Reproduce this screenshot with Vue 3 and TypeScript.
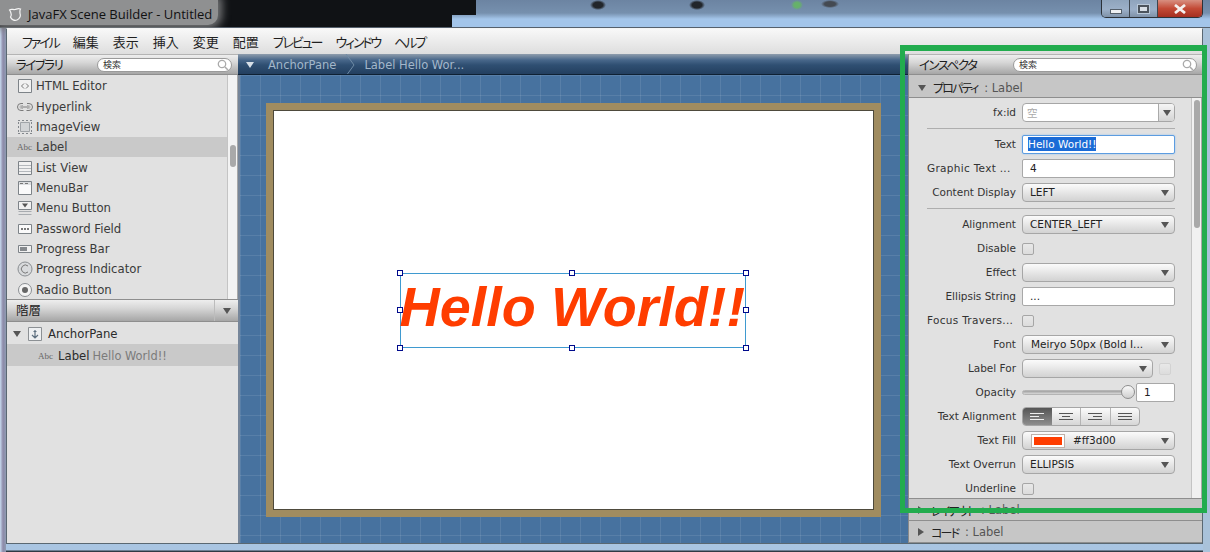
<script setup lang="ts">
interface Shape { d: string; fill?: string; stroke?: string }
interface LibItem { name: string; icon: Shape[]; abc?: boolean; selected?: boolean }

const box = (y: number, h: number): string => `M1.5 ${y}.5h13v${h}h-13z`
const line = '#7d8388'
const fillGrey = '#f1f1f1'

const libItems: LibItem[] = [
  { name: 'HTML Editor', icon: [
    { d: box(1, 13), fill: fillGrey, stroke: line },
    { d: 'M7 5.500 4.500 8 7 10.500M9 5.500 11.500 8 9 10.500', stroke: '#777' } ] },
  { name: 'Hyperlink', icon: [
    { d: 'M6 4.500H4a3.500 3.500 0 0 0 0 7h2.500M10 4.500h2a3.500 3.500 0 0 1 0 7H9.500M4 8h8', stroke: '#7a7a7a' },
    { d: 'M6 6.500H4.500a1.500 1.500 0 0 0 0 3H6M10 6.500h1.500a1.500 1.500 0 0 1 0 3H10', stroke: '#b0b0b0' } ] },
  { name: 'ImageView', icon: [
    { d: 'M1 1.500h2m2 0h2m2 0h2m2 0h2M1 14.500h2m2 0h2m2 0h2m2 0h2M1.500 3v2m0 2v2m0 2v2M14.500 3v2m0 2v2m0 2v2', stroke: '#82878c' },
    { d: 'M3.500 3.500h9v9h-9z', fill: '#d2d4d6', stroke: '#a0a4a8' } ] },
  { name: 'Label', abc: true, selected: true, icon: [] },
  { name: 'List View', icon: [
    { d: box(1, 13), fill: fillGrey, stroke: line },
    { d: 'M2 5.500h12M2 8.500h12M2 11.500h12', stroke: '#b4b8bc' } ] },
  { name: 'MenuBar', icon: [
    { d: box(1, 13), fill: '#fafafa', stroke: line },
    { d: 'M2 2h12v3H2z', fill: '#dcdee0' },
    { d: 'M3 3.500h3M8 3.500h3', stroke: '#777' } ] },
  { name: 'Menu Button', icon: [
    { d: box(1, 8), fill: fillGrey, stroke: line },
    { d: 'M5 3.500h6L8 7.500z', fill: '#555' },
    { d: 'M1.500 11.500h13M1.500 14.500h13', stroke: '#a8acb0' } ] },
  { name: 'Password Field', icon: [
    { d: box(3, 9), fill: '#fafafa', stroke: line },
    { d: 'M4 7h2v2H4zM7 7h2v2H7zM10 7h2v2h-2z', fill: '#777' } ] },
  { name: 'Progress Bar', icon: [
    { d: box(4, 7), fill: fillGrey, stroke: line },
    { d: 'M3 6h7v4H3z', fill: '#85898d' } ] },
  { name: 'Progress Indicator', icon: [
    { d: 'M8 1a7 7 0 1 0 0 14A7 7 0 0 0 8 1z', fill: '#d8dadc', stroke: '#8a8e92' },
    { d: 'M11 5a4 4 0 1 0 0 6', stroke: '#777' } ] },
  { name: 'Radio Button', icon: [
    { d: 'M8 1.500a6.500 6.500 0 1 0 0 13a6.500 6.500 0 0 0 0-13z', fill: '#f4f4f4', stroke: '#8a8e92' },
    { d: 'M8 5a3 3 0 1 0 0 6a3 3 0 0 0 0-6z', fill: '#666' } ] },
]

const menus: string[] = ['ファイル', '編集', '表示', '挿入', '変更', '配置', 'プレビュー', 'ウィンドウ', 'ヘルプ']
const isKana = (m: string): boolean => /[ァ-ヶー]/.test(m)

type Kind = 'fxid' | 'focused' | 'field' | 'combo' | 'check' | 'sep' | 'labelFor' | 'slider' | 'align' | 'fill'
interface PropRow { label?: string; kind: Kind; value?: string; indent?: boolean }

const props: PropRow[] = [
  { label: 'fx:id', kind: 'fxid', value: '空' },
  { kind: 'sep' },
  { label: 'Text', kind: 'focused', value: 'Hello World!!' },
  { label: 'Graphic Text ...', kind: 'field', value: '4' },
  { label: 'Content Display', kind: 'combo', value: 'LEFT' },
  { kind: 'sep' },
  { label: 'Alignment', kind: 'combo', value: 'CENTER_LEFT' },
  { label: 'Disable', kind: 'check' },
  { label: 'Effect', kind: 'combo', value: '' },
  { label: 'Ellipsis String', kind: 'field', value: '...' },
  { label: 'Focus Travers...', kind: 'check' },
  { label: 'Font', kind: 'combo', value: 'Meiryo 50px (Bold I...', indent: true },
  { label: 'Label For', kind: 'labelFor' },
  { label: 'Opacity', kind: 'slider', value: '1' },
  { label: 'Text Alignment', kind: 'align' },
  { label: 'Text Fill', kind: 'fill', value: '#ff3d00' },
  { label: 'Text Overrun', kind: 'combo', value: 'ELLIPSIS' },
  { label: 'Underline', kind: 'check' },
]

const alignIcons: string[] = [
  'M0 1.500h14M0 4.500h9M0 7.500h14',
  'M0 1.500h14M3 4.500h8M0 7.500h14',
  'M0 1.500h14M5 4.500h9M0 7.500h14',
  'M0 1.500h14M0 4.500h14M0 7.500h14',
]

const handles: string[] = ['tl', 'tc', 'tr', 'ml', 'mr', 'bl', 'bc', 'br']
</script>

<template>
  <div class="screen">
    <header class="titlebar">
      <div class="title">
        <svg class="logo" width="14" height="14" viewBox="0 0 14 14">
          <path d="M1.500 3C3.500 1.500 5 3 7 2.500S10 1 12.500 2c-1 1.500-.5 3-.5 4.500A5 5 0 0 1 2.500 10C4 7.500 3 5 1.500 3z" fill="none" stroke="#f4f4f4" stroke-width="1.200" />
        </svg>
        <span>JavaFX Scene Builder - Untitled</span>
      </div>
      <div class="winbtns">
        <div class="wb min"><i></i></div>
        <div class="wb max"><i></i></div>
        <div class="wb close">
          <svg width="14" height="10" viewBox="0 0 14 10"><path d="M2 1l10 8M12 1 2 9" stroke="#f4f0ee" stroke-width="2.800" /></svg>
        </div>
      </div>
    </header>

    <div class="app">
      <nav class="menubar">
        <span v-for="m in menus" :key="m" :class="{ kana: isKana(m) }">{{ m }}</span>
      </nav>

      <div class="workspace">
        <aside class="left">
          <div class="phead">
            <span class="ptitle">ライブラリ</span>
            <div class="search lib-search">
              <span>検索</span>
              <svg width="12" height="12" viewBox="0 0 12 12"><circle cx="5" cy="5" r="3.700" fill="none" stroke="#aaa" stroke-width="1.300" /><path d="M8 8l3 3" stroke="#aaa" stroke-width="1.500" /></svg>
            </div>
          </div>
          <div class="library">
            <ul class="items">
              <li v-for="it in libItems" :key="it.name" :class="{ sel: it.selected }">
                <span v-if="it.abc" class="abc">Abc</span>
                <svg v-else width="16" height="16" viewBox="0 0 16 16" class="ic">
                  <path v-for="(s, i) in it.icon" :key="i" :d="s.d" :fill="s.fill ?? 'none'" :stroke="s.stroke ?? 'none'" />
                </svg>
                <span>{{ it.name }}</span>
              </li>
            </ul>
            <div class="vscroll lib-scroll"><div class="thumb"></div></div>
          </div>
          <div class="phead hier">
            <span class="ptitle">階層</span>
            <div class="hmenu"><b class="tri down"></b></div>
          </div>
          <div class="tree">
            <div class="trow">
              <b class="tri down dark"></b>
              <svg width="16" height="16" viewBox="0 0 16 16">
                <path d="M1.500 1.500h13v13h-13z" fill="#eef0f2" stroke="#8c9094" />
                <path d="M8 4v8M5 9l3 3 3-3M6.500 5.500h3" fill="none" stroke="#5e7080" stroke-width="1.200" />
              </svg>
              <span class="tname">AnchorPane</span>
            </div>
            <div class="trow child">
              <span class="abc">Abc</span>
              <span class="tname">Label</span>
              <span class="tval">Hello World!!</span>
            </div>
          </div>
        </aside>

        <main class="center">
          <div class="crumbs">
            <b class="tri down light"></b>
            <span class="crumb">AnchorPane</span>
            <svg width="10" height="22" viewBox="0 0 10 22"><path d="M1 0l8 11-8 11" fill="none" stroke="#6f8ba6" /></svg>
            <span class="crumb">Label Hello Wor...</span>
          </div>
          <div class="canvas">
            <div class="page">
              <div class="sheet">
                <div class="selection">
                  <span class="hello">Hello World!!</span>
                  <i v-for="h in handles" :key="h" class="handle" :class="h"></i>
                </div>
              </div>
            </div>
          </div>
        </main>

        <aside class="right">
          <div class="phead insp">
            <span class="ptitle">インスペクタ</span>
            <div class="search insp-search">
              <span>検索</span>
              <svg width="12" height="12" viewBox="0 0 12 12"><circle cx="5" cy="5" r="3.700" fill="none" stroke="#aaa" stroke-width="1.300" /><path d="M8 8l3 3" stroke="#aaa" stroke-width="1.500" /></svg>
            </div>
          </div>
          <div class="section first"><b class="tri down dark"></b><span class="jp">プロパティ</span><span class="sec-rest"> : Label</span></div>
          <div class="propwrap">
            <div class="props">
              <template v-for="(r, i) in props" :key="i">
                <div v-if="r.kind === 'sep'" class="sep"></div>
                <div v-else class="prow">
                  <label class="plabel" :class="{ cut: r.label?.endsWith('...') }">{{ r.label }}</label>
                  <div class="pctl">
                    <div v-if="r.kind === 'fxid'" class="combo editable">
                      <span class="empty">{{ r.value }}</span>
                      <span class="arrowbox"><b class="tri down dark"></b></span>
                    </div>
                    <div v-else-if="r.kind === 'focused'" class="field focused"><mark>{{ r.value }}</mark></div>
                    <div v-else-if="r.kind === 'field'" class="field">{{ r.value }}</div>
                    <div v-else-if="r.kind === 'combo'" class="combo" :class="{ indent: r.indent }">
                      <span>{{ r.value }}</span><b class="tri down dark"></b>
                    </div>
                    <div v-else-if="r.kind === 'check'" class="check"></div>
                    <div v-else-if="r.kind === 'labelFor'" class="split">
                      <div class="combo grow"><span></span><b class="tri down dark"></b></div>
                      <div class="check faint"></div>
                    </div>
                    <div v-else-if="r.kind === 'slider'" class="split slider-row">
                      <div class="slider"><i class="knob"></i></div>
                      <div class="field small">{{ r.value }}</div>
                    </div>
                    <div v-else-if="r.kind === 'align'" class="seg">
                      <button v-for="(d, k) in alignIcons" :key="k" :class="{ on: k === 0 }" type="button">
                        <svg width="14" height="9" viewBox="0 0 14 9"><path :d="d" fill="none" :stroke="k === 0 ? '#eee' : '#555'" /></svg>
                      </button>
                    </div>
                    <div v-else-if="r.kind === 'fill'" class="combo color">
                      <span class="swatch"></span><span class="colortxt">{{ r.value }}</span><b class="tri down dark"></b>
                    </div>
                  </div>
                </div>
              </template>
            </div>
            <div class="vscroll prop-scroll"><div class="thumb"></div></div>
          </div>
          <div class="section closed"><b class="tri rightward"></b><span class="jp">レイアウト</span><span class="sec-rest"> : Label</span></div>
          <div class="section closed"><b class="tri rightward"></b><span class="jp">コード</span><span class="sec-rest"> : Label</span></div>
        </aside>
      </div>
    </div>

    <div class="highlight"></div>
  </div>
</template>

<style>
html, body { margin: 0; padding: 0; background: #000; }
</style>

<style scoped>
.screen {
  position: relative;
  width: 1210px;
  height: 552px;
  overflow: hidden;
  box-sizing: border-box;
  padding: 0 7px 8px 6px;
  display: flex;
  flex-direction: column;
  font-family: "DejaVu Sans", sans-serif;
  background:
    linear-gradient(to right, #c8dcf0 0, #8d8aa8 3px, #8e9bb2 6px, transparent 6px, transparent 1203px, #a9c2da 1203px),
    linear-gradient(to bottom, #1a1c1f 0, #1a1c1f 28px, #9dbbd9 28px, #a9c5e2 549px, #a9c5e2 550px, #2e3a44 551px);
}
.titlebar {
  height: 28px;
  box-sizing: border-box;
  margin: 0 -7px 0 -6px;
  display: flex;
  justify-content: space-between;
  flex: none;
  border-bottom: 1px solid #55606c;
  background-color: #a3c5ea;
  background-image:
    radial-gradient(ellipse 8px 5px at 598px 5px, #22262b 60%, transparent),
    radial-gradient(ellipse 8px 5px at 697px 5px, #22262b 60%, transparent),
    radial-gradient(ellipse 6px 5px at 797px 5px, #66b16a 50%, transparent),
    radial-gradient(ellipse 9px 4px at 830px 4px, #444a52 60%, transparent),
    linear-gradient(#101215, #101215),
    linear-gradient(#101215, #101215),
    linear-gradient(#6c84a2, #7690ae 13px, #a3c5ea 19px, #a3c5ea);
  background-size: 100% 100%, 100% 100%, 100% 100%, 100% 100%, 476px 15px, 452px 100%, 100% 100%;
  background-repeat: no-repeat;
}
.title {
  display: flex;
  align-items: center;
  gap: 6px;
  height: 25px;
  padding: 2px 6px 0 8px;
  box-sizing: border-box;
  font-family: "Open Sans", sans-serif;
  font-size: 13px;
  color: #111;
  background: #8f9091;
  box-shadow: 0 0 8px 4px #77787a;
  border-radius: 0 0 10px 0;
}
.winbtns { display: flex; width: 102px; height: 18px; box-sizing: border-box; margin-right: 7px; border: 1px solid #2c3238; border-top: 0; border-radius: 0 0 5px 5px; overflow: hidden; }
.wb { display: flex; align-items: center; justify-content: center; height: 100%; box-sizing: border-box; }
.wb.min, .wb.max { width: 28px; flex: none; background: linear-gradient(#8fa4bc, #9cb0c8 55%, #7f92a8); border-right: 1px solid #3d454e; }
.wb.min i { display: block; width: 10px; height: 3px; margin-top: 6px; background: #eef0f2; border: 1px solid #555f6a; }
.wb.max i { display: block; width: 7px; height: 4px; border: 2px solid #4c545c; background: #d8dfe6; outline: 1px solid #b8c8d8; }
.wb.close { flex: 1; background: linear-gradient(#d88f80, #c34a36 50%, #a52f20); }

.app {
  flex: 1;
  min-height: 0;
  display: flex;
  flex-direction: column;
  border: 1px solid #5a6872;
  border-top: 1px solid #f4f4f4;
  background: #e1e1e1;
}
.menubar {
  height: 25px;
  flex: none;
  display: flex;
  align-items: center;
  gap: 14px;
  padding-left: 15px;
  font-family: "Noto Sans CJK JP", sans-serif;
  font-feature-settings: "palt";
  font-size: 13px;
  color: #1f1f1f;
  background: linear-gradient(#f8f8f8, #dedede);
}
.menubar .kana { letter-spacing: -2.100px; }
.workspace { flex: 1; min-height: 0; display: flex; }

.phead {
  height: 21px;
  flex: none;
  display: flex;
  align-items: center;
  box-sizing: border-box;
  border-top: 1px solid #b4b4b4;
  border-bottom: 1px solid #8e8e8e;
  background: linear-gradient(#eeeeee, #d6d6d6 40%, #a6a6a6);
}
.ptitle {
  font-family: "Noto Sans CJK JP", sans-serif;
  font-feature-settings: "palt";
  font-size: 12.500px;
  letter-spacing: -1.500px;
  color: #1c1c1c;
  white-space: nowrap;
}
.hier .ptitle { letter-spacing: 0; }
.search {
  height: 14px;
  background: #fff;
  border-radius: 8px;
  border: 1px solid #9a9a9a;
  display: flex;
  align-items: center;
  justify-content: space-between;
  padding: 0 2px 0 5px;
  box-sizing: border-box;
  font-family: "Noto Sans CJK JP", sans-serif;
  font-size: 9px;
  color: #333;
  flex: none;
}

.left { width: 231px; flex: none; display: flex; flex-direction: column; background: #e1e1e1; }
.left .phead .ptitle { margin-left: 9px; }
.lib-search { width: 135px; margin-left: auto; margin-right: 6px; }
.library { height: 224px; flex: none; display: flex; overflow: hidden; }
.items { flex: 1; margin: 0; padding: 1px 0 0; list-style: none; font-size: 11.700px; color: #3a3a3a; }
.items li { height: 20.350px; display: flex; align-items: center; padding-left: 10px; }
.items li.sel { background: #c9c9c9; }
.ic { flex: none; margin-right: 3px; }
.abc {
  width: 16px;
  margin-right: 3px;
  flex: none;
  font-family: "Liberation Serif", serif;
  font-size: 9px;
  color: #666;
}
.vscroll { flex: none; box-sizing: border-box; background: #f3f3f3; border-left: 1px solid #c4c4c4; border-right: 1px solid #a8a8a8; position: relative; }
.lib-scroll { width: 11px; }
.lib-scroll .thumb { width: 6px; height: 22px; margin: 70px 0 0 2px; background: #a9a9a9; border-radius: 3px; }
.hier { height: 23px; border-top: 1px solid #8e8e8e; justify-content: space-between; padding-bottom: 2px; }
.hmenu { width: 23px; height: 21px; margin-bottom: -2px; display: flex; align-items: center; justify-content: center; border-left: 1px solid #bcbcbc; }
.tree { font-size: 11.700px; color: #333; }
.trow { height: 22px; box-sizing: border-box; display: flex; align-items: center; padding: 1px 0 0 6px; }
.trow svg { margin: 0 5px 0 6px; }
.trow.child { background: #c9c9c9; padding-left: 31px; }
.trow.child .abc { margin-right: 4px; }
.tname { color: #2b2b2b; }
.tval { margin-left: 3px; color: #7b7b7b; font-size: 11.400px; }

.tri { display: inline-block; width: 0; height: 0; flex: none; }
.tri.down { border-left: 4px solid transparent; border-right: 4px solid transparent; border-top: 6px solid #555; }
.tri.down.light { border-top-color: #d8e0e8; }
.tri.rightward { border-top: 4px solid transparent; border-bottom: 4px solid transparent; border-left: 6px solid #555; }

.center { width: 670px; flex: none; display: flex; flex-direction: column; }
.crumbs {
  height: 21px;
  flex: none;
  box-sizing: border-box;
  display: flex;
  align-items: center;
  padding: 1px 0 0 8px;
  overflow: hidden;
  font-size: 11.500px;
  color: #a3b7ca;
  border-bottom: 1px solid #0f2133;
  background: linear-gradient(#8f9dac, #48678a 30%, #2f4f72 55%, #233f5f);
}
.crumbs .crumb:first-of-type { margin-left: 14px; }
.crumbs svg { margin: 0 9px 0 9px; }
.canvas {
  flex: 1;
  min-height: 0;
  display: flex;
  align-items: center;
  justify-content: center;
  padding-right: 2px;
  border-left: 2px solid #76869a;
  box-sizing: border-box;
  background-color: #47729f;
  background-image:
    linear-gradient(rgba(255, 255, 255, .09) 1px, transparent 1px),
    linear-gradient(90deg, rgba(255, 255, 255, .09) 1px, transparent 1px);
  background-size: 20px 20px;
}
.page { background: #a08c60; padding: 7px; box-sizing: border-box; width: 615px; height: 414px; margin-top: 1px; }
.sheet { width: 100%; height: 100%; background: #fff; border: 1px solid #4e4a3c; box-sizing: border-box; position: relative; }
.selection {
  position: absolute;
  left: 126px;
  top: 162px;
  width: 346px;
  height: 75px;
  box-sizing: border-box;
  border: 1px solid #3f9ad0;
  display: flex;
  align-items: center;
}
.hello {
  font-family: "Liberation Sans", sans-serif;
  font-weight: bold;
  font-style: italic;
  font-size: 55.700px;
  line-height: 1;
  color: #ff3d00;
  white-space: nowrap;
  margin: 0 0 5px -1px;
}
.handle { position: absolute; width: 4px; height: 4px; background: #fff; border: 1px solid #000a8c; }
.tl { left: -4px; top: -4px; } .tc { left: 168px; top: -4px; } .tr { right: -4px; top: -4px; }
.ml { left: -4px; top: 33px; } .mr { right: -4px; top: 33px; }
.bl { left: -4px; bottom: -4px; } .bc { left: 168px; bottom: -4px; } .br { right: -4px; bottom: -4px; }

.right { flex: 1; min-width: 0; display: flex; flex-direction: column; background: #e1e1e1; border-left: 1px solid #8a8a8a; }
.insp .ptitle { margin-left: 10px; }
.insp-search { width: 184px; margin-left: auto; margin-right: 5px; }
.section {
  height: 22px;
  flex: none;
  box-sizing: border-box;
  display: flex;
  align-items: center;
  gap: 5px;
  padding: 1px 0 0 9px;
  background: #c6c6c6;
  border-bottom: 1px solid #8e8e8e;
  font-size: 11.500px;
  color: #555;
}
.section.first { height: 23px; padding-top: 3px; }
.section .jp {
  font-family: "Noto Sans CJK JP", sans-serif;
  font-feature-settings: "palt";
  font-size: 12px;
  letter-spacing: -1.800px;
  color: #222;
  margin-left: 2px;
}
.section .sec-rest { white-space: pre; margin-left: -2px; }
.propwrap { flex: 1; min-height: 0; display: flex; border-bottom: 1px solid #8e8e8e; }
.props {
  flex: 1;
  min-width: 0;
  box-sizing: border-box;
  padding: 5px 16px 0 18px;
  display: flex;
  flex-direction: column;
  gap: 5px;
  font-size: 10.500px;
  color: #333;
}
.sep { height: 1px; margin: 1px 0; background: #aeaeae; flex: none; }
.prow { height: 19px; flex: none; display: flex; align-items: center; }
.plabel { width: 89px; flex: none; text-align: right; white-space: nowrap; margin-right: 6px; padding-bottom: 2px; box-sizing: border-box; }
.plabel.cut { letter-spacing: .3px; padding-right: 6px; }
.pctl { flex: 1; min-width: 0; display: flex; align-items: center; height: 100%; }
.pctl > * { width: 100%; }
.prop-scroll { width: 11px; background: #f1f1f1; }
.prop-scroll .thumb { width: 6px; height: 128px; margin: 2px 0 0 2px; background: #a9a9a9; border-radius: 3px; }

.combo {
  height: 19px;
  box-sizing: border-box;
  display: flex;
  align-items: center;
  justify-content: space-between;
  padding: 0 5px 2px 7px;
  border: 1px solid #a6a6a6;
  border-radius: 4px;
  background: linear-gradient(#fbfbfb, #d2d2d2);
  color: #222;
  white-space: nowrap;
  overflow: hidden;
}
.combo .tri { margin: 2px 0 0 4px; }
.combo.indent { padding-left: 8px; }
.combo.editable { padding: 0 0 0 4px; background: #fff; }
.empty { font-family: "Noto Sans CJK JP", sans-serif; color: #aaa; font-size: 10.500px; }
.arrowbox { width: 16px; height: 100%; display: flex; align-items: center; justify-content: center; border-left: 1px solid #aaa; background: linear-gradient(#f6f6f6, #d4d4d4); box-sizing: border-box; }
.arrowbox .tri { margin: 0; }
.field {
  height: 19px;
  box-sizing: border-box;
  display: flex;
  align-items: center;
  padding: 0 0 1px 7px;
  border: 1px solid #a8a8a8;
  border-radius: 2px;
  background: #fff;
  color: #222;
}
.field.focused { border: 1px solid #5c9ce0; box-shadow: 0 0 2px #8dbef0; padding-left: 5px; }
mark { background: #1b6bd6; color: #fff; line-height: 14px; }
.check { width: 12px !important; height: 12px; box-sizing: border-box; flex: none; border: 1px solid #a6a6a6; border-radius: 2px; background: linear-gradient(#e8e8e8, #dcdcdc); }
.check.faint { border-color: #d2d2d2; margin-left: 6px; margin-right: 4px; }
.split { display: flex; align-items: center; }
.grow { flex: 1; min-width: 0; }
.slider-row { gap: 5px; }
.slider { flex: 1; height: 5px; position: relative; background: linear-gradient(#a0a0a0, #d8d8d8); border-radius: 3px; border: 1px solid #b4b4b4; box-sizing: border-box; }
.knob { position: absolute; right: -5px; top: -6px; width: 14px; height: 14px; box-sizing: border-box; border-radius: 50%; border: 1px solid #8e8e8e; background: linear-gradient(#fafafa, #cfcfcf); }
.field.small { width: 39px; flex: none; }
.seg { display: flex; width: 118px !important; height: 19px; box-sizing: border-box; border: 1px solid #a6a6a6; border-radius: 4px; overflow: hidden; background: linear-gradient(#fbfbfb, #d6d6d6); }
.seg button { flex: 1; padding: 0; border: 0; background: none; display: flex; align-items: center; justify-content: center; border-left: 1px solid #b4b4b4; }
.seg button:first-child, .seg button:nth-child(2) { border-left: 0; }
.seg button.on { background: linear-gradient(#555, #8e8e8e); }
.color { padding-left: 9px; justify-content: flex-start; }
.swatch { width: 32px; height: 12px; box-sizing: border-box; flex: none; margin-top: 2px; background: #ff3d00; border: 2px solid #fff; outline: 1px solid #c0b0a8; }
.colortxt { margin-left: 9px; flex: 1; }

.highlight {
  position: absolute;
  left: 900px;
  top: 45px;
  width: 307px;
  height: 468px;
  box-sizing: border-box;
  border: 5px solid #22ac4e;
  border-top-width: 6px;
  pointer-events: none;
}
</style>
